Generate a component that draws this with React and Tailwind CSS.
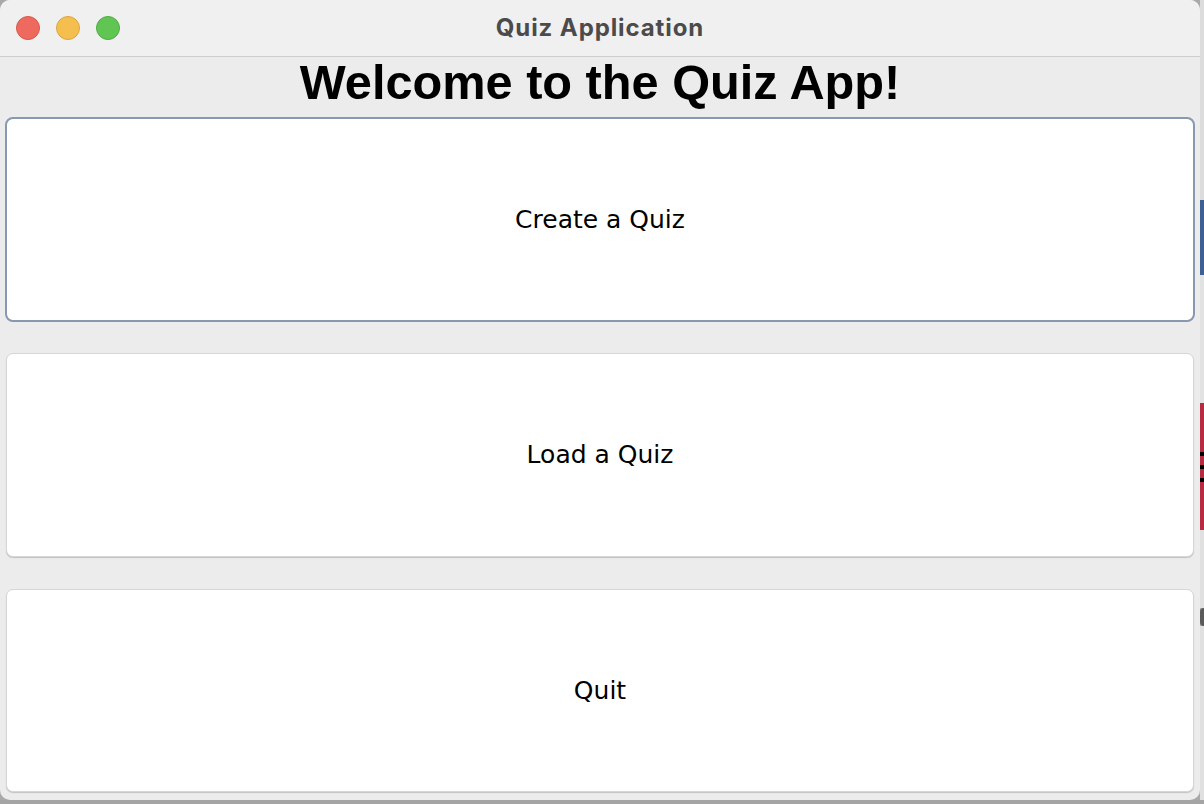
export default function App() {
  return (
    <div className="w-[1204px] h-[804px] bg-[#a9a9a9] flex flex-col overflow-hidden">
      <div className="flex h-[800px]">
        <div className="w-[1200px] h-[800px] rounded-[10px] overflow-hidden bg-[#ececec] flex flex-col">
          {/* title bar */}
          <div className="h-[57px] shrink-0 bg-[#f0f0f0] border-b border-[#cdcdcd] relative flex items-center justify-center">
            <div className="absolute left-[16px] top-[16px] flex gap-[16px]">
              <span className="w-[24px] h-[24px] rounded-full bg-[#ee6a5f] border border-[#d5574c]" />
              <span className="w-[24px] h-[24px] rounded-full bg-[#f5bf4f] border border-[#d9a542]" />
              <span className="w-[24px] h-[24px] rounded-full bg-[#61c554] border border-[#4fac43]" />
            </div>
            <span className="text-[24px] font-bold text-[#4b4b4b] font-['Inter',sans-serif] tracking-[0.9px]">
              Quiz Application
            </span>
          </div>

          <div className="flex flex-col px-[5px]">
            <h1 className="h-[51px] leading-[51px] text-center text-[48.7px] font-bold text-black font-['Liberation_Sans',Arial,sans-serif]">
              Welcome to the Quiz App!
            </h1>

            <button className="mt-[9px] h-[205px] w-full rounded-[8px] bg-white border-2 border-[#8798b0] text-[25px] text-black font-['DejaVu_Sans',sans-serif]">
              Create a Quiz
            </button>

            <button className="mt-[31px] mx-[1px] h-[204px] rounded-[7px] bg-white border border-[#d6d6d6] shadow-[0_1px_1px_rgba(0,0,0,0.18)] text-[25px] text-black font-['DejaVu_Sans',sans-serif]">
              Load a Quiz
            </button>

            <button className="mt-[32px] mx-[1px] h-[203px] rounded-[7px] bg-white border border-[#d6d6d6] shadow-[0_1px_1px_rgba(0,0,0,0.18)] text-[25px] text-black font-['DejaVu_Sans',sans-serif]">
              Quit
            </button>
          </div>
        </div>

        {/* desktop behind, right edge */}
        <div className="w-[4px] flex flex-col">
          <div className="h-[200px] bg-[#dcdcdc]" />
          <div className="h-[75px] bg-[#3d5f93]" />
          <div className="h-[128px] bg-[#e2e2e2]" />
          <div className="h-[127px] bg-[#b82a42] flex flex-col justify-center gap-[9px]">
            <div className="h-[4px] bg-black" />
            <div className="h-[4px] bg-black" />
            <div className="h-[4px] bg-black" />
          </div>
          <div className="h-[78px] bg-[#e0e0e0]" />
          <div className="h-[18px] bg-[#5a5a5a] rounded-l-full" />
          <div className="flex-1 bg-[#e0e0e0]" />
        </div>
      </div>
      <div className="h-[4px] bg-[#a4a4a4]" />
    </div>
  );
}
